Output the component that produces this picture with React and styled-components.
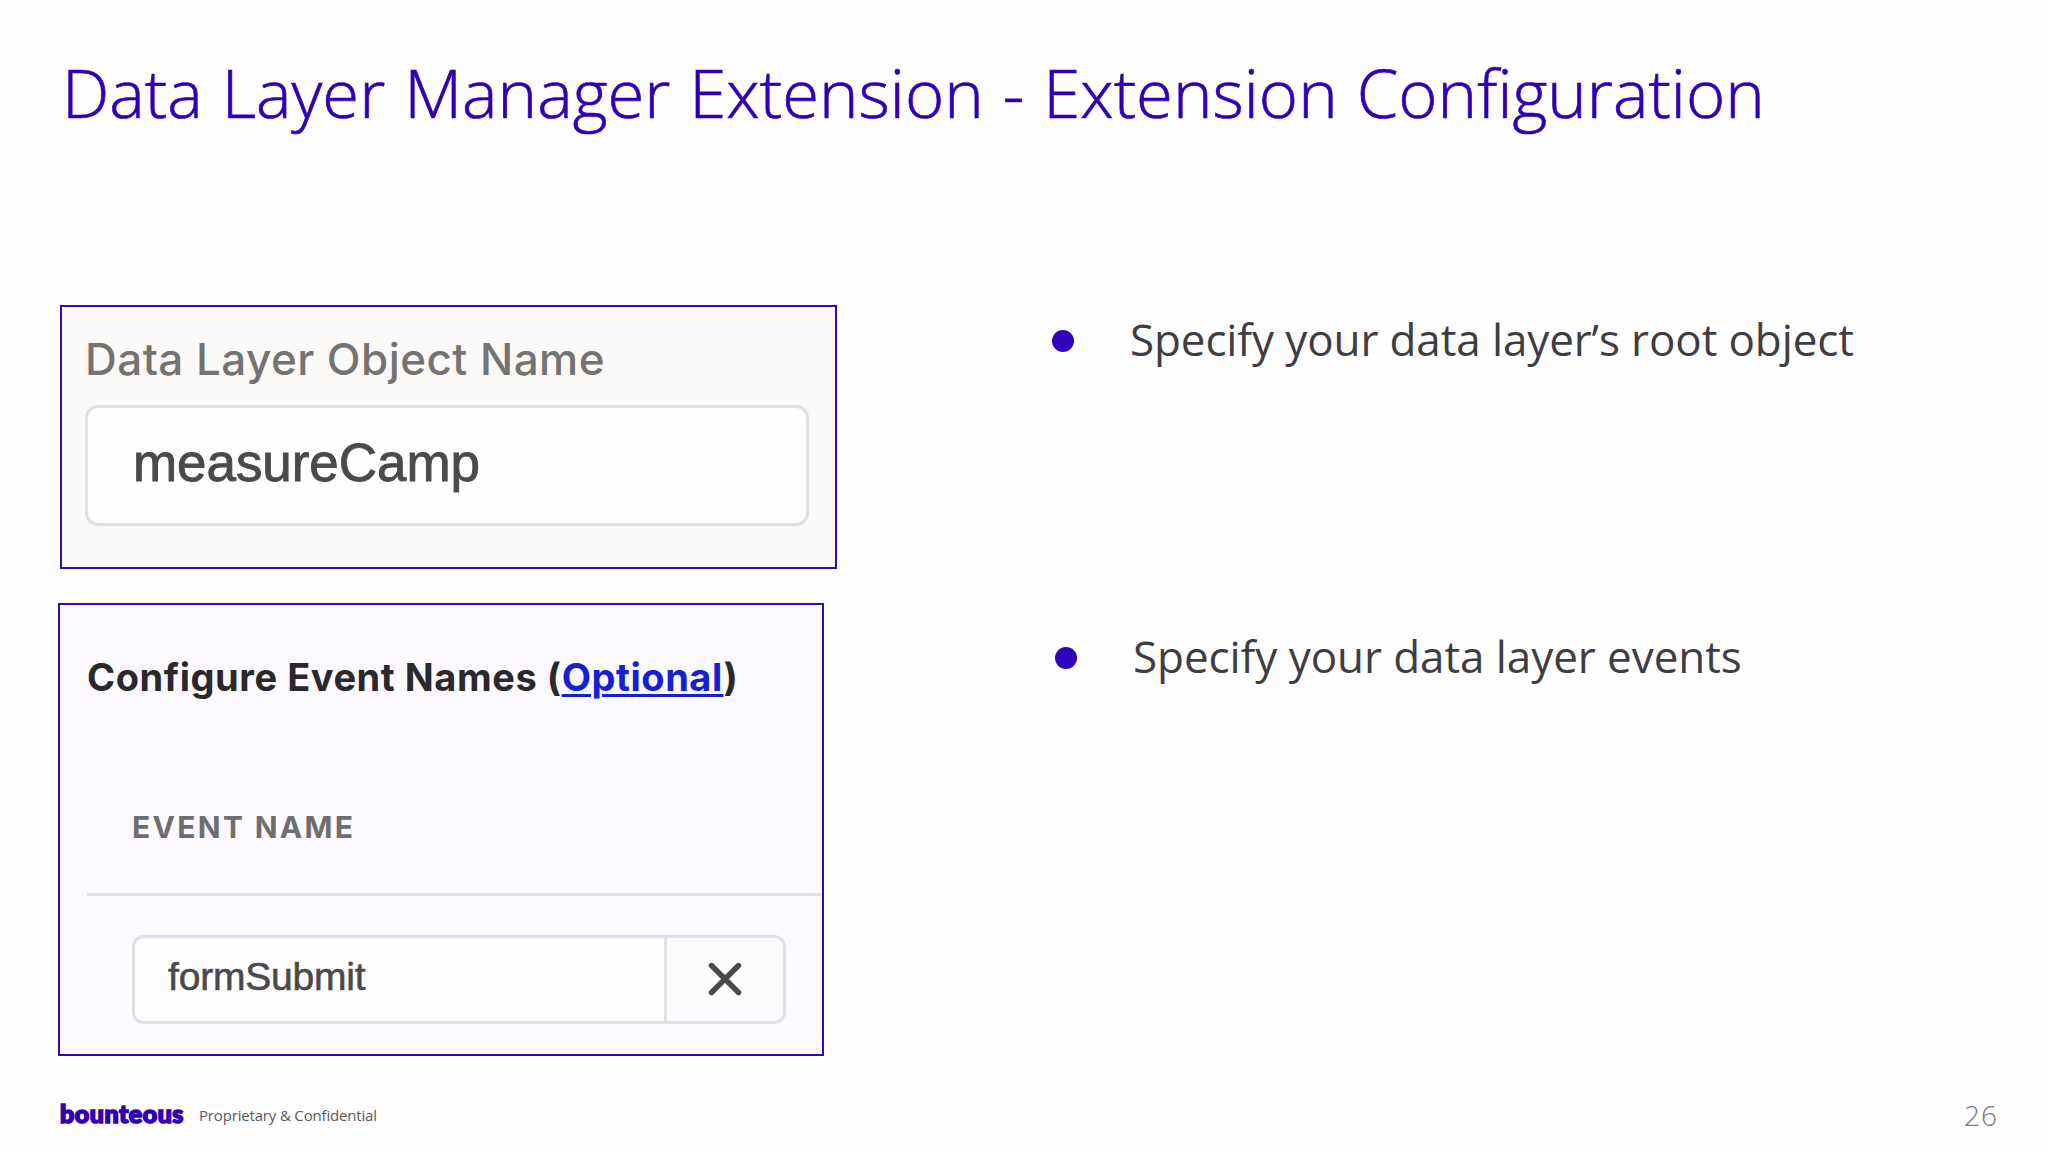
import React from "react";
import styled, { createGlobalStyle } from "styled-components";

const brand = "#3100b4";
const sans = '"Open Sans", "Noto Sans", sans-serif';
const ui = 'Inter, "Open Sans", sans-serif';
const field = '"Liberation Sans", Arial, sans-serif';

const GlobalStyle = createGlobalStyle`
  *, *::before, *::after { box-sizing: border-box; }
  body { margin: 0; background: #fefefe; }
`;

const Slide = styled.main`
  display: flex;
  flex-direction: column;
  width: 2048px;
  height: 1152px;
  padding-top: 46px;
  overflow: hidden;
  background: #fefefe;
  font-family: ${sans};
`;

const Title = styled.h1`
  margin: 0 0 167px;
  padding-left: 62px;
  font-size: 67px;
  line-height: 92px;
  font-weight: 330;
  letter-spacing: 0.02px;
  word-spacing: 1.5px;
  font-feature-settings: "liga" 1;
  -webkit-text-stroke: 0.7px ${brand};
  white-space: nowrap;
  color: ${brand};
`;

const Body = styled.div`
  display: grid;
  grid-template-columns: 1052px 1fr;
  height: 751px;
`;

const Shots = styled.div`
  display: flex;
  flex-direction: column;
  gap: 34px;
`;

const Shot = styled.section`
  display: flex;
  flex-direction: column;
  align-items: flex-start;
  width: ${(p) => p.$width}px;
  height: ${(p) => p.$height}px;
  margin-left: ${(p) => p.$left}px;
  padding: ${(p) => p.$padding};
  border: 2px solid #3508a8;
  background: ${(p) => p.$background};
`;

const FieldLabel = styled.label`
  margin-bottom: 19px;
  font: 460 44px/54px ${ui};
  letter-spacing: 0.45px;
  white-space: nowrap;
  color: #747371;
`;

const NameField = styled.div`
  width: 724px;
  height: 121px;
  padding: 25px 0 0 45px;
  border: 3px solid #e1e0df;
  border-radius: 13px;
  background: #fefefd;
  font: 400 53px/59px ${field};
  letter-spacing: -0.06px;
  -webkit-text-stroke: 0.9px #4b4a49;
  color: #4b4a49;
`;

const Heading = styled.h2`
  margin: 0 0 109px 27px;
  font: 700 38px/46px ${ui};
  letter-spacing: 0.55px;
  white-space: nowrap;
  color: #29282b;
`;

const OptionalLink = styled.a`
  color: #1420d2;
  text-decoration: underline;
  text-decoration-thickness: 2.5px;
  text-underline-offset: 3px;
`;

const ColumnHead = styled.div`
  margin: 0 0 48px 72px;
  font: 700 30px/36px ${ui};
  letter-spacing: 2.3px;
  white-space: nowrap;
  color: #6f6d71;
`;

const Divider = styled.hr`
  width: 735px;
  height: 3px;
  margin: 0 0 39px 27px;
  border: 0;
  background: #e2e0e4;
`;

const EventField = styled.div`
  display: flex;
  width: 654px;
  height: 89px;
  margin-left: 72px;
  border: 3px solid #e2e0e4;
  border-radius: 12px;
  overflow: hidden;
`;

const EventValue = styled.div`
  width: 529px;
  padding: 17px 0 0 33px;
  background: #fefefe;
  font: 400 39px/43px ${field};
  letter-spacing: -0.2px;
  -webkit-text-stroke: 0.6px #4a494c;
  color: #4a494c;
`;

const RemoveButton = styled.button`
  flex: 1;
  display: flex;
  align-items: center;
  justify-content: center;
  padding: 0 1px 1px 0;
  border: 0;
  border-left: 3px solid #e2e0e4;
  background: #fbfafd;
`;

const Points = styled.ul`
  display: flex;
  flex-direction: column;
  gap: 257px;
  margin: 0;
  padding: 4px 0 0;
  list-style: none;
`;

const Point = styled.li`
  display: flex;
  align-items: center;
  gap: 56px;
  margin-left: ${(p) => p.$indent}px;
  font-size: 44px;
  line-height: 60px;
  letter-spacing: ${(p) => p.$tracking}px;
  white-space: nowrap;
  color: #3f3d42;

  &::before {
    content: "";
    width: 22px;
    height: 22px;
    margin-top: 4px;
    border-radius: 50%;
    background: #3000bd;
  }
`;

const Footer = styled.footer`
  display: flex;
  align-items: flex-start;
  padding: 40px 50px 0 60px;
`;

const Logo = styled.span`
  width: 139px;
  padding-top: 2px;
  font: 900 25px/30px Lato, ${sans};
  letter-spacing: 0.52px;
  -webkit-text-stroke: 1.7px ${brand};
  color: ${brand};
`;

const Notice = styled.span`
  flex: 1;
  padding-top: 9px;
  font-size: 15px;
  line-height: 20px;
  letter-spacing: -0.17px;
  color: #5a595d;
`;

const PageNumber = styled.span`
  font-size: 28px;
  line-height: 38px;
  font-weight: 300;
  letter-spacing: 1px;
  color: #77767a;
`;

function CrossIcon() {
  return (
    <svg width="34" height="34" viewBox="0 0 34 34" fill="none" stroke="#4a494c" strokeWidth="5.4" strokeLinecap="round">
      <path d="M3.5 3.5 30.5 30.5M30.5 3.5 3.5 30.5" />
    </svg>
  );
}

export default function App() {
  return (
    <>
      <GlobalStyle />
      <Slide>
        <Title>Data Layer Manager Extension - Extension Configuration</Title>
        <Body>
          <Shots>
            <Shot $width={777} $height={264} $left={60} $padding="25px 0 0 23px" $background="#fbfaf9">
              <FieldLabel>Data Layer Object Name</FieldLabel>
              <NameField>measureCamp</NameField>
            </Shot>
            <Shot $width={766} $height={453} $left={58} $padding="49px 0 0" $background="#fcfafe">
              <Heading>
                Configure Event Names (<OptionalLink>Optional</OptionalLink>)
              </Heading>
              <ColumnHead>EVENT NAME</ColumnHead>
              <Divider />
              <EventField>
                <EventValue>formSubmit</EventValue>
                <RemoveButton aria-label="Remove">
                  <CrossIcon />
                </RemoveButton>
              </EventField>
            </Shot>
          </Shots>
          <Points>
            <Point $indent={0} $tracking={-0.12}>Specify your data layer’s root object</Point>
            <Point $indent={3} $tracking={-0.07}>Specify your data layer events</Point>
          </Points>
        </Body>
        <Footer>
          <Logo>bounteous</Logo>
          <Notice>Proprietary &amp; Confidential</Notice>
          <PageNumber>26</PageNumber>
        </Footer>
      </Slide>
    </>
  );
}
